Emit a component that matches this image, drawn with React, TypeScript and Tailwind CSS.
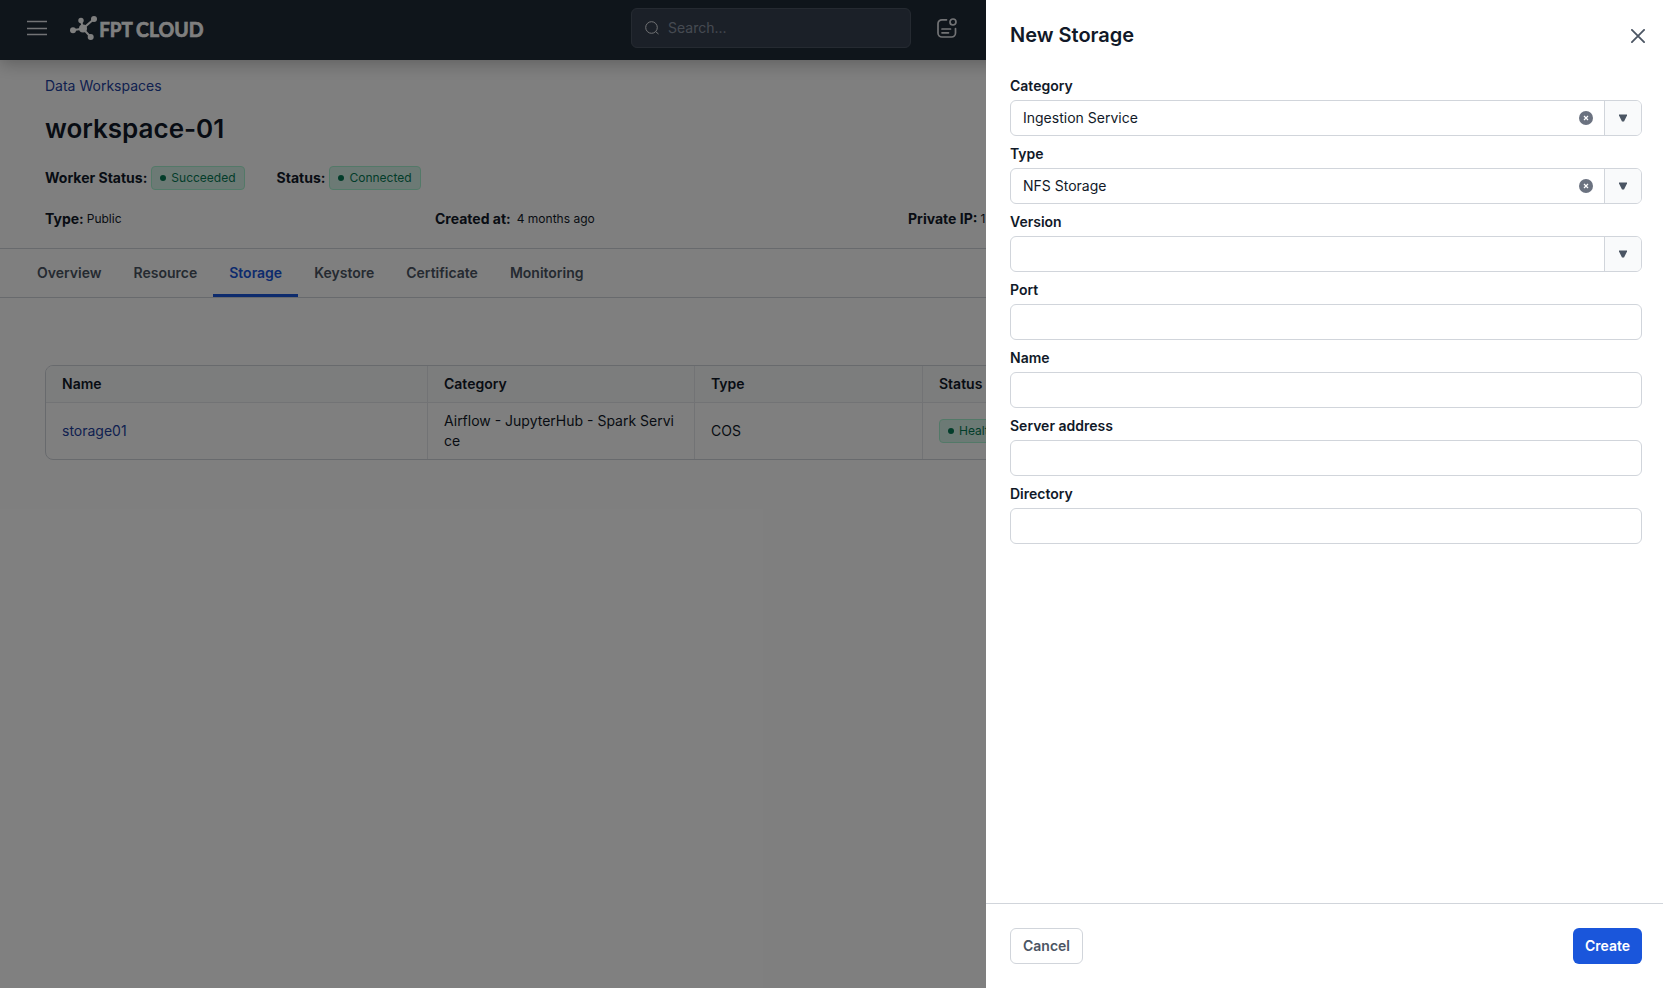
import type { ReactNode } from "react";

function Badge({ children }: { children: ReactNode }) {
  return (
    <span className="inline-flex h-6 items-center gap-[5px] rounded border border-[#a7f3d0] bg-[#d9f5ea] px-2 text-xs whitespace-nowrap text-[#057a55]">
      <span className="size-1.5 rounded-full bg-[#057a55]" />
      {children}
    </span>
  );
}

function Logo() {
  return (
    <svg width="140" height="26" viewBox="0 0 140 26" className="block text-white">
      <g stroke="currentColor" strokeWidth="2" fill="none">
        <path d="M3 15.3 13 13.6 24 4M13 13.6 11 5.500M13 13.600 20.700 22" />
      </g>
      <g fill="currentColor">
        <circle cx="3" cy="15.300" r="3" />
        <circle cx="13" cy="13.600" r="4" />
        <circle cx="24" cy="4" r="3" />
        <circle cx="11" cy="5.500" r="2.700" />
        <circle cx="20.700" cy="22" r="3" />
      </g>
      <text x="29.200" y="21.600" textLength="33.500" lengthAdjust="spacingAndGlyphs" fill="currentColor" stroke="currentColor" strokeWidth="0.700" className="font-[Lato] text-[20.5px] font-bold">
        FPT
      </text>
      <text x="66" y="21.600" textLength="67.500" lengthAdjust="spacingAndGlyphs" fill="currentColor" stroke="currentColor" strokeWidth="0.700" className="font-[Lato] text-[20.5px] font-bold">
        CLOUD
      </text>
    </svg>
  );
}

function Header() {
  return (
    <header className="relative flex h-[60px] items-center bg-[#1f2a37] pb-1 shadow-[0_4px_16px_rgba(0,0,0,0.25)]">
      <svg width="20" height="16" viewBox="0 0 20 16" className="ml-[27px] block" stroke="#e5e7eb" strokeWidth="1.400">
        <path d="M0 1.500h20M0 8.500h20M0 14.500h20" />
      </svg>
      <div className="ml-[23px] w-[134px]">
        <Logo />
      </div>
      <div className="ml-[427px] flex h-10 w-[280px] items-center gap-[9px] rounded-md border border-[#4b5563] bg-[#374151] pl-[13px] text-sm text-[#8b94a3]">
        <svg width="14" height="14" viewBox="0 0 14 14" fill="none" stroke="#e5e7eb">
          <circle cx="6.500" cy="6.500" r="5.800" />
          <path d="m10.700 10.700 2.800 2.300" />
        </svg>
        Search...
      </div>
      <svg width="20" height="20" viewBox="0 0 20 20" className="ml-[26px]" fill="none" stroke="#e5e7eb" strokeWidth="1.700" strokeLinecap="round">
        <path d="M9.500 1.800H5A4 4 0 0 0 1 5.800V15a4 4 0 0 0 4 4h9.500a4 4 0 0 0 4-4v-4.500" />
        <path d="M5 11h8.500M5 14.800h6.500" />
        <circle cx="16" cy="4" r="3" />
      </svg>
    </header>
  );
}

const tabs = ["Overview", "Resource", "Storage", "Keystore", "Certificate", "Monitoring"];

function Workspace() {
  return (
    <main>
      <div className="h-[188px] pl-[45px]">
        <div className="pt-4 text-sm leading-5 text-[#1e429f]">Data Workspaces</div>
        <h1 className="mt-4 text-[26px] leading-[34px] font-semibold">workspace-01</h1>
        <div className="mt-5 flex h-6 items-center text-sm">
          <b className="mr-1 font-bold">Worker Status:</b>
          <Badge>Succeeded</Badge>
          <b className="mr-1 ml-8 font-bold">Status:</b>
          <Badge>Connected</Badge>
        </div>
        <div className="mt-[19px] flex h-5 items-center text-sm">
          <div className="flex w-[390px] items-center gap-[3px]">
            <b className="font-bold">Type:</b>
            <span className="text-xs">Public</span>
          </div>
          <div className="flex w-[473px] items-center gap-1.5">
            <b className="font-bold">Created at:</b>
            <span className="text-xs">4 months ago</span>
          </div>
          <div className="flex items-center gap-[3px]">
            <b className="font-bold">Private IP:</b>
            <span className="text-xs">1</span>
          </div>
        </div>
      </div>
      <nav className="flex h-[50px] border-y border-[#d1d5db] pl-[21px] text-sm font-semibold text-[#4b5563]">
        {tabs.map((t) => (
          <div
            key={t}
            className={
              t === "Storage"
                ? "flex items-center border-b-[3px] border-[#1a56db] px-4 pt-[3px] text-[#1a56db]"
                : "flex items-center px-4"
            }
          >
            {t}
          </div>
        ))}
      </nav>
      <div className="mt-[67px] ml-[45px] w-[1573px] overflow-hidden rounded-lg border border-[#d1d5db] text-sm">
        <div className="grid h-[37px] grid-cols-[382px_267px_228px_1fr] divide-x divide-[#e5e7eb] border-b border-[#e5e7eb] bg-[#f9fafb] font-semibold">
          {["Name", "Category", "Type", "Status"].map((h) => (
            <div key={h} className="flex items-center px-4">
              {h}
            </div>
          ))}
        </div>
        <div className="grid h-14 grid-cols-[382px_267px_228px_1fr] divide-x divide-[#e5e7eb]">
          <div className="flex items-center px-4 text-[#1e429f]">storage01</div>
          <div className="flex items-center px-4 leading-5 break-all">Airflow - JupyterHub - Spark Service</div>
          <div className="flex items-center px-4">COS</div>
          <div className="flex items-center px-4">
            <Badge>Healthy</Badge>
          </div>
        </div>
      </div>
    </main>
  );
}

type FieldProps = { label: string; value?: string; select?: boolean };

function Field({ label, value, select }: FieldProps) {
  return (
    <div className="mb-2">
      <div className="mb-1 text-sm leading-5 font-semibold">{label}</div>
      <div className="flex h-9 overflow-hidden rounded-md border border-[#d1d5db] text-sm">
        <div className="flex flex-1 items-center justify-between pr-[11px] pl-3">
          {value}
          {value && (
            <svg width="14" height="14" viewBox="0 0 14 14">
              <circle cx="7" cy="7" r="7" fill="#6b7280" />
              <path d="m5 5 4 4m0-4-4 4" stroke="#fff" strokeWidth="1.200" />
            </svg>
          )}
        </div>
        {select && (
          <div className="flex w-[37px] items-center justify-center border-l border-[#d1d5db] bg-[#f9fafb]">
            <svg width="8" height="8" viewBox="0 0 8 8">
              <path d="M0 .5h8v1L5 7.500H3L0 1.500z" fill="#4b5563" />
            </svg>
          </div>
        )}
      </div>
    </div>
  );
}

function StorageDrawer() {
  return (
    <aside className="absolute inset-y-0 right-0 flex w-[677px] flex-col bg-white">
      <div className="flex h-[76px] items-start justify-between pt-[21px] pr-[18px] pl-6">
        <h2 className="text-xl leading-7 font-semibold">New Storage</h2>
        <svg width="14" height="14" viewBox="0 0 14 14" className="mt-2" stroke="#4b5563" strokeWidth="1.800" strokeLinecap="round">
          <path d="m.9.9 12.200 12.200M13.100.9.9 13.100" />
        </svg>
      </div>
      <div className="flex-1 pr-[21px] pl-6">
        <Field label="Category" value="Ingestion Service" select />
        <Field label="Type" value="NFS Storage" select />
        <Field label="Version" select />
        <Field label="Port" />
        <Field label="Name" />
        <Field label="Server address" />
        <Field label="Directory" />
      </div>
      <footer className="flex h-[85px] items-start justify-between border-t border-[#d1d5db] pt-6 pr-[21px] pl-6 text-sm font-semibold">
        <button className="h-9 w-[73px] rounded-md border border-[#d1d5db] text-[#4b5563]">Cancel</button>
        <button className="h-9 w-[69px] rounded-md bg-[#1a56db] text-white">Create</button>
      </footer>
    </aside>
  );
}

export default function App() {
  return (
    <div className="relative h-[988px] w-[1663px] overflow-hidden bg-white font-[Inter,sans-serif] text-[#111928]">
      <Header />
      <Workspace />
      <div className="absolute inset-0 bg-black/50" />
      <StorageDrawer />
    </div>
  );
}
